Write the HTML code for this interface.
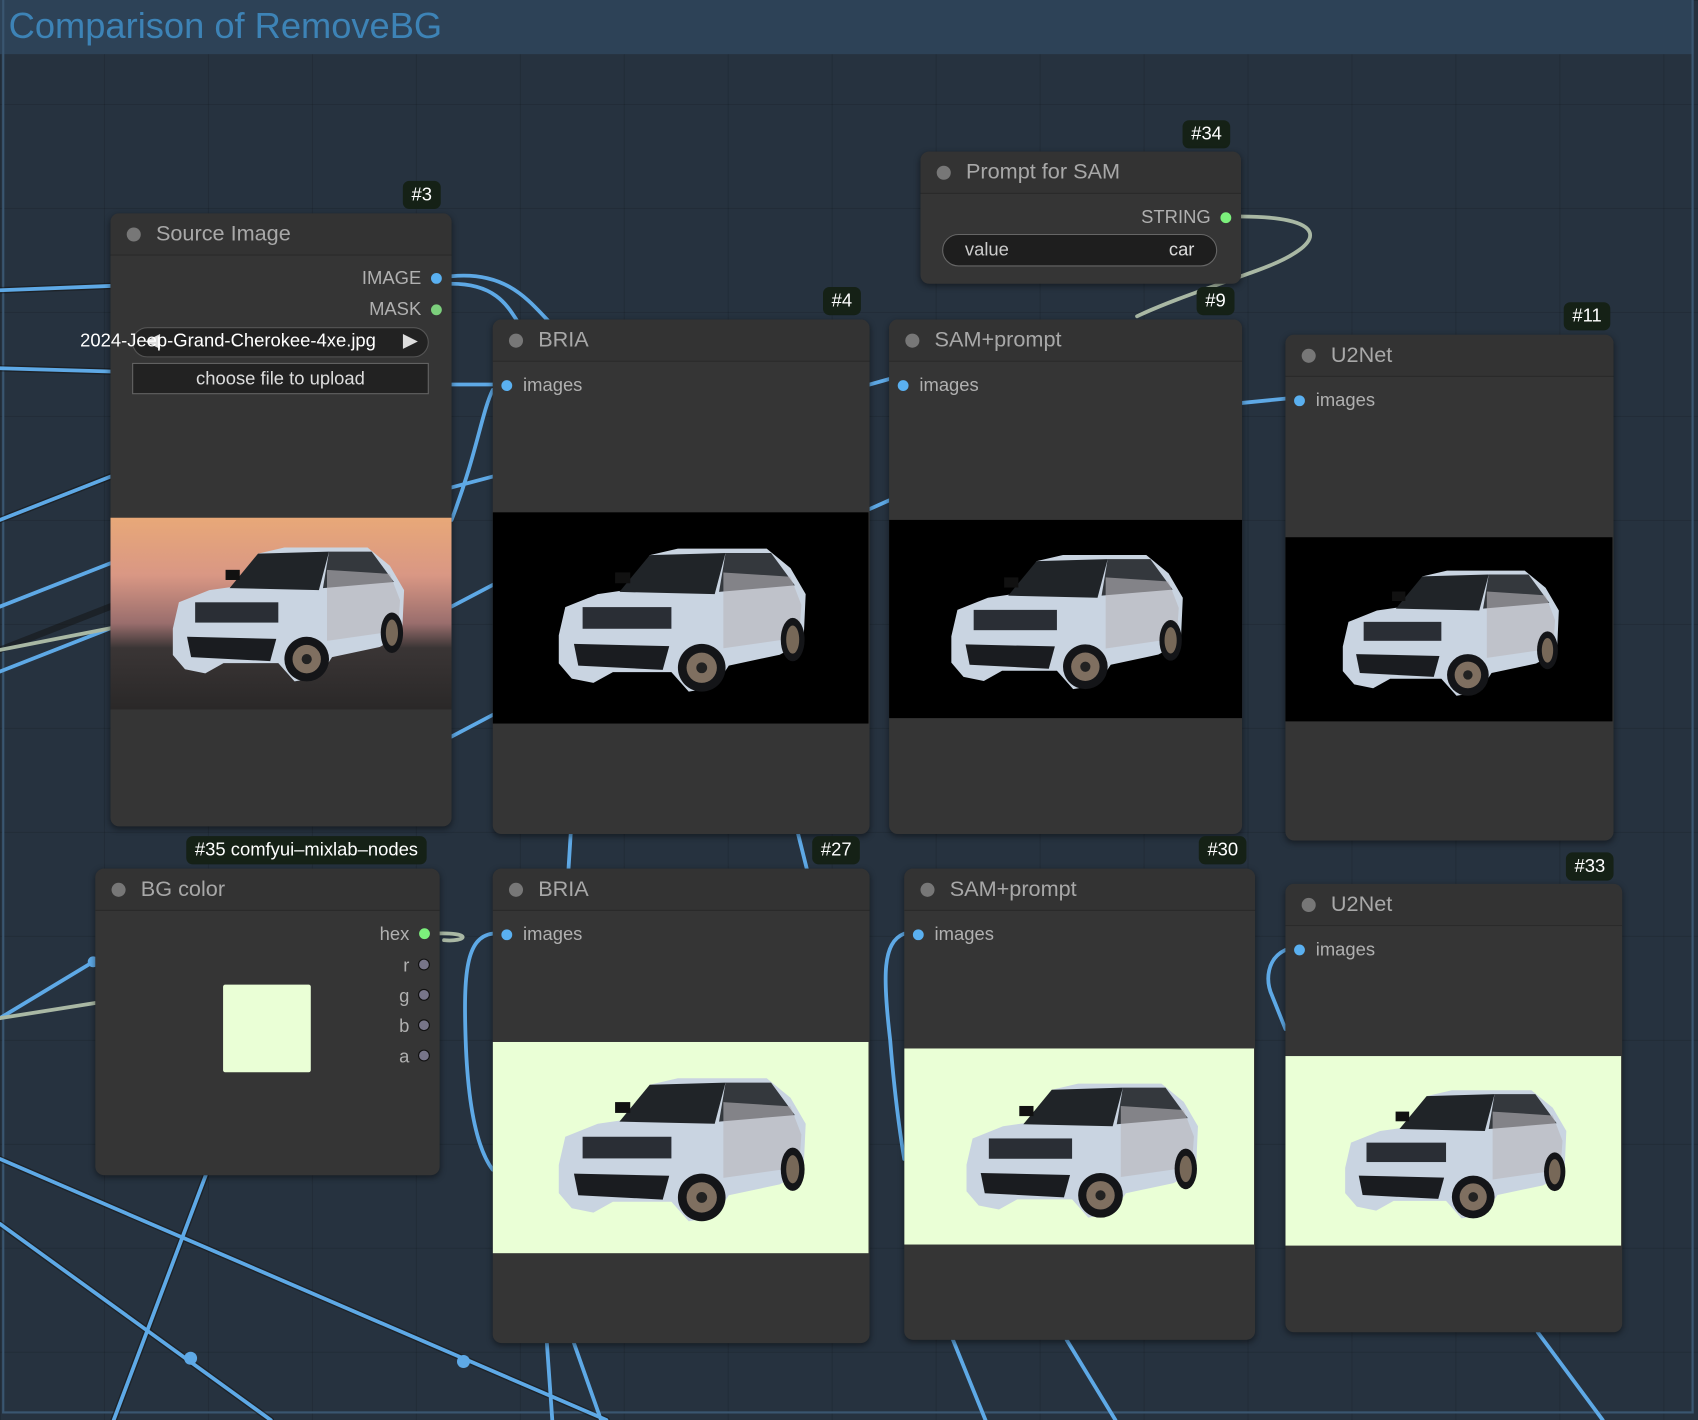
<!DOCTYPE html>
<html><head><meta charset="utf-8"><style>
html,body{margin:0;padding:0;width:1698px;height:1420px;overflow:hidden;background:#1f2a35;}
#w{position:absolute;left:0;top:0;width:1568px;height:1311px;transform:scale(1.08291,1.08314);transform-origin:0 0;
background-color:#26323f;background-image:linear-gradient(rgba(0,0,0,.12) 1px,transparent 1px),linear-gradient(90deg,rgba(0,0,0,.12) 1px,transparent 1px);background-size:96px 96px;font-family:"Liberation Sans",sans-serif;}
.grp{position:absolute;left:2px;top:0;width:1558px;height:1303px;border:2px solid #3a5670;border-top:none;}
.gt{position:absolute;left:0;top:0;width:1564px;height:50px;background:#2d4257;color:#3d83b6;font-size:33.5px;line-height:50px;padding-left:8px;box-sizing:border-box;}
.n{position:absolute;background:#353535;border-radius:8px;box-shadow:0 2px 6px rgba(0,0,0,.45);overflow:hidden;}
.n .t{height:38px;border-bottom:1px solid #2a2a2a;color:#a8a8a8;font-size:20px;line-height:38px;padding-left:42px;position:relative;background:#333;}
.n .t:before{content:"";position:absolute;left:15px;top:13px;width:13px;height:13px;border-radius:50%;background:#777;}
.b{position:absolute;background:#152116;color:#fff;font-size:17px;height:26px;line-height:26px;padding:0 8px;border-radius:6px;}
.in{position:absolute;left:28px;color:#b0b0b0;font-size:17px;}
.in:before{content:"";position:absolute;left:-20px;top:5px;width:10px;height:10px;border-radius:50%;background:#5ab0f0;}
.out{position:absolute;color:#b0b0b0;font-size:17px;text-align:right;}
.dot{position:absolute;width:10px;height:10px;border-radius:50%;}
.img{position:absolute;left:0;}
svg.w{position:absolute;left:0;top:0;}
</style></head><body><div id="w">
<svg width="0" height="0" style="position:absolute"><defs>
<g id="car">
<path d="M8,88 L14,62 L44,50 L72,46 L92,14 L118,8 L200,8 L222,26 L236,50 L234,94 L212,106 L165,116 L152,136 L128,140 L112,122 L58,122 L40,132 L20,128 L8,114 Z" fill="#c9d4e1"/>
<path d="M64,48 L92,14 L162,12 L152,50 Z" fill="#202428"/>
<path d="M162,12 L204,12 L226,42 L156,48 Z" fill="#34383d"/>
<path d="M160,30 L222,34 L232,60 L230,90 L160,100 Z" fill="#b9b6bb" opacity=".6"/>
<rect x="30" y="62" width="82" height="20" fill="#2a2e35"/>
<path d="M22,96 L110,98 L104,120 L26,116 Z" fill="#1a1c20"/>
<circle cx="140" cy="118" r="22" fill="#141518"/><circle cx="140" cy="118" r="14" fill="#7f6f60"/><circle cx="140" cy="118" r="5" fill="#222"/>
<ellipse cx="224" cy="92" rx="11" ry="20" fill="#141518"/><ellipse cx="224" cy="92" rx="6" ry="13" fill="#776858"/>
<rect x="60" y="30" width="14" height="10" fill="#111"/>
</g></defs></svg>
<div class="gt">Comparison of RemoveBG</div>
<div class="grp"></div>
<svg class="w" width="1568" height="1311" fill="none" stroke-linecap="round">
<g stroke="#111" stroke-width="6" opacity=".5">
<path d="M0,268 L102,264 M0,340 L102,343 M0,480 L102,440 M0,600 L102,560 M0,1070 L560,1311 M0,1130 L250,1311 M190,1085 L105,1311"/>
</g>
<g stroke="#5ea9e6" stroke-width="3.5">
<path d="M0,268 L102,264"/><path d="M0,340 L102,343"/>
<path d="M0,480 L102,440"/><path d="M0,560 L102,520"/><path d="M0,620 L102,580"/>
<path d="M417,255 C470,250 490,280 510,300"/><path d="M417,262 C460,262 470,285 480,300"/>
<path d="M417,355 L455,355"/><path d="M417,450 L455,440"/><path d="M417,480 C440,420 445,380 455,360"/>
<path d="M417,560 L455,540"/><path d="M417,680 L455,660"/>
<path d="M803,355 L821,350"/><path d="M803,470 L821,462"/><path d="M1147,372 L1187,368"/>
<path d="M527,770 L525,802"/><path d="M737,770 L745,802"/>
<path d="M0,1070 L560,1311"/><path d="M0,1130 L250,1311"/><path d="M190,1085 L105,1311"/>
<path d="M505,1240 L510,1311"/><path d="M530,1240 L555,1311"/>
<path d="M880,1237 L910,1311"/><path d="M985,1237 L1030,1311"/>
<path d="M1420,1230 L1480,1311"/>
<path d="M455,862 C430,865 428,900 430,960 C432,1020 440,1060 455,1080"/>
<path d="M835,862 C815,870 815,900 822,960 C826,1010 830,1040 835,1070"/>
<path d="M1187,877 C1170,885 1168,905 1175,920 L1187,950"/>
<path d="M0,940 L86,888"/>
</g>
<circle cx="176" cy="1254" r="6" fill="#5ea9e6"/><circle cx="428" cy="1257" r="6" fill="#5ea9e6"/><circle cx="86" cy="888" r="5" fill="#5ea9e6"/>
<g stroke="#a9b8a4" stroke-width="3.5">
<path d="M1136,200 C1230,198 1230,225 1160,250 C1110,268 1075,280 1050,292"/>
<path d="M0,940 L88,926"/><path d="M0,600 L102,580"/>
<path d="M398,862 C440,860 430,870 410,868"/>
</g>
</svg>

<div class="b" style="left:372px;top:167px;">#3</div>
<div class="n" style="left:102px;top:197px;width:315px;height:566px;">
<div class="t">Source Image</div>
<div class="out" style="right:28px;top:50px;">IMAGE</div><div class="dot" style="right:9px;top:55px;background:#5ab0f0;"></div>
<div class="out" style="right:28px;top:79px;">MASK</div><div class="dot" style="right:9px;top:84px;background:#7ccf7c;"></div>
<div style="position:absolute;left:20px;top:105px;width:272px;height:26px;border:1px solid #555;border-radius:14px;background:#222;"></div>
<div style="position:absolute;left:270px;top:107px;color:#ddd;font-size:18px;">▶</div>
<div style="position:absolute;left:32px;top:107px;color:#ddd;font-size:18px;">◀</div>
<div style="position:absolute;left:20px;top:138px;width:272px;height:27px;border:1px solid #666;background:#222;color:#ddd;font-size:17px;line-height:27px;text-align:center;">choose file to upload</div>
<div style="position:absolute;left:0;top:281px;width:315px;height:177px;background:linear-gradient(#e8a878 0%,#d99784 30%,#9a6e6d 55%,#3a3535 68%,#2a2828 100%);overflow:hidden;">
<svg style="position:absolute;left:50px;top:20px" width="225" height="133" viewBox="0 0 240 142"><use href="#car"/></svg></div>
</div>
<div style="position:absolute;left:74px;top:305px;color:#fff;font-size:17px;">2024-Jeep-Grand-Cherokee-4xe.jpg</div>

<div class="b" style="left:1092px;top:111px;">#34</div>
<div class="n" style="left:850px;top:140px;width:296px;height:122px;">
<div class="t">Prompt for SAM</div>
<div class="out" style="right:28px;top:51px;">STRING</div><div class="dot" style="right:9px;top:56px;background:#7cf07c;"></div>
<div style="position:absolute;left:20px;top:76px;width:252px;height:28px;border:1px solid #666;border-radius:15px;background:#1e1e1e;color:#ccc;font-size:17px;line-height:28px;">
<span style="position:absolute;left:20px;">value</span><span style="position:absolute;right:20px;color:#ddd;">car</span></div>
</div>

<div class="b" style="left:760px;top:265px;">#4</div>
<div class="n" style="left:455px;top:295px;width:348px;height:475px;">
<div class="t">BRIA</div><div class="in" style="top:51px;">images</div>
<div class="img" style="top:178px;width:347px;height:195px;background:#000;"><svg style="position:absolute;left:53px;top:24px" width="240" height="145" viewBox="0 0 240 142"><use href="#car"/></svg></div>
</div>

<div class="b" style="left:1105px;top:265px;">#9</div>
<div class="n" style="left:821px;top:295px;width:326px;height:475px;">
<div class="t">SAM+prompt</div><div class="in" style="top:51px;">images</div>
<div class="img" style="top:185px;width:326px;height:183px;background:#000;"><svg style="position:absolute;left:50px;top:24px" width="225" height="135" viewBox="0 0 240 142"><use href="#car"/></svg></div>
</div>

<div class="b" style="left:1444px;top:279px;">#11</div>
<div class="n" style="left:1187px;top:309px;width:303px;height:467px;">
<div class="t">U2Net</div><div class="in" style="top:51px;">images</div>
<div class="img" style="top:187px;width:302px;height:170px;background:#000;"><svg style="position:absolute;left:46px;top:22px" width="210" height="128" viewBox="0 0 240 142"><use href="#car"/></svg></div>
</div>

<div class="b" style="left:172px;top:772px;">#35 comfyui–mixlab–nodes</div>
<div class="n" style="left:88px;top:802px;width:318px;height:283px;">
<div class="t">BG color</div>
<div class="out" style="right:28px;top:51px;">hex</div><div class="dot" style="right:9px;top:55px;background:#7cf07c;"></div>
<div class="out" style="right:28px;top:80px;">r</div><div class="dot" style="right:9px;top:83px;background:#777589;border:1px solid #111;width:9px;height:9px"></div>
<div class="out" style="right:28px;top:108px;">g</div><div class="dot" style="right:9px;top:111px;background:#777589;border:1px solid #111;width:9px;height:9px"></div>
<div class="out" style="right:28px;top:136px;">b</div><div class="dot" style="right:9px;top:139px;background:#777589;border:1px solid #111;width:9px;height:9px"></div>
<div class="out" style="right:28px;top:164px;">a</div><div class="dot" style="right:9px;top:167px;background:#777589;border:1px solid #111;width:9px;height:9px"></div>
<div style="position:absolute;left:118px;top:107px;width:81px;height:81px;background:#eaffd6;border-radius:2px;"></div>
</div>

<div class="b" style="left:750px;top:772px;">#27</div>
<div class="n" style="left:455px;top:802px;width:348px;height:438px;">
<div class="t">BRIA</div><div class="in" style="top:51px;">images</div>
<div class="img" style="top:160px;width:347px;height:195px;background:#eaffd6;"><svg style="position:absolute;left:53px;top:24px" width="240" height="145" viewBox="0 0 240 142"><use href="#car"/></svg></div>
</div>

<div class="b" style="left:1107px;top:772px;">#30</div>
<div class="n" style="left:835px;top:802px;width:324px;height:435px;">
<div class="t">SAM+prompt</div><div class="in" style="top:51px;">images</div>
<div class="img" style="top:166px;width:323px;height:181px;background:#eaffd6;"><svg style="position:absolute;left:50px;top:24px" width="225" height="135" viewBox="0 0 240 142"><use href="#car"/></svg></div>
</div>

<div class="b" style="left:1446px;top:787px;">#33</div>
<div class="n" style="left:1187px;top:816px;width:311px;height:414px;">
<div class="t">U2Net</div><div class="in" style="top:51px;">images</div>
<div class="img" style="top:159px;width:310px;height:175px;background:#eaffd6;"><svg style="position:absolute;left:48px;top:22px" width="215" height="132" viewBox="0 0 240 142"><use href="#car"/></svg></div>
</div>
</div></body></html>
